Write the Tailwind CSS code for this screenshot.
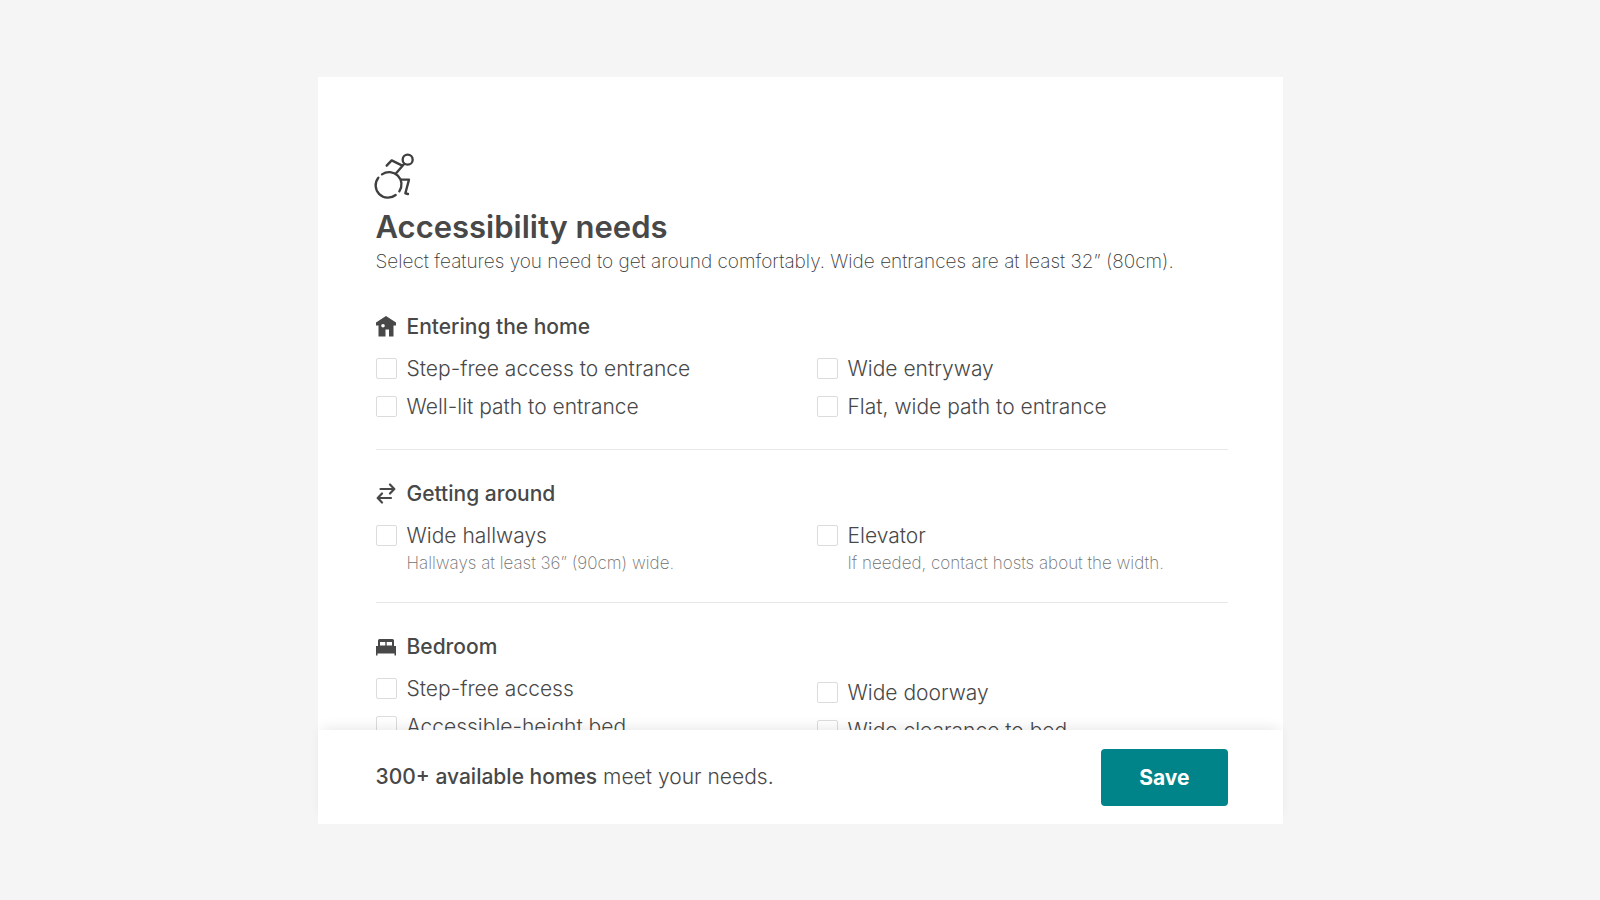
<!DOCTYPE html>
<html lang="en">
<head>
<meta charset="utf-8">
<meta name="viewport" content="width=device-width, initial-scale=1">
<title>Accessibility needs</title>
<script src="https://cdn.jsdelivr.net/npm/@tailwindcss/browser@4"></script>
</head>
<body class="flex min-h-screen items-center justify-center bg-[#f5f5f5] font-['Inter','Liberation_Sans',sans-serif] text-[21px] leading-[30px] font-light text-[#484848]">
<form class="flex h-[83vh] w-full max-w-[965px] flex-col bg-white">
  <div class="min-h-0 flex-1 overflow-hidden pt-[76px] pr-[55px] pl-[58px]">
    <header>
      <svg class="h-[45px] w-10 overflow-visible" viewBox="48 39 120 135" fill="none" stroke="#3f3f3f" stroke-width="7" stroke-linecap="round" stroke-linejoin="round" aria-hidden="true">
        <circle cx="143" cy="59" r="15"/>
        <path d="M80 77 95 61 127 77M133 71 107 101"/>
        <path d="M66 103A37 37 0 0 1 118 154"/>
        <path d="M55 113A37 37 0 0 0 107 165"/>
        <path d="M123 119H147L136 160 144 162"/>
      </svg>
      <h1 class="mt-[9px] text-[31px] leading-10 font-semibold">Accessibility needs</h1>
      <p class="text-[19px] leading-[30px] font-extralight text-[#383838]">Select features you need to get around comfortably. Wide entrances are at least 32” (80cm).</p>
    </header>

    <section class="mt-[35px] border-b border-[#e8e8e8] pb-[27px]">
      <h2 class="mb-3 flex items-center gap-[9px] font-medium">
        <svg class="h-[22px] w-[22px]" viewBox="0 0 22 22" fill="#484848" aria-hidden="true"><path fill-rule="evenodd" d="M10 0 20 6.500V9.500H17.500V20.500H13V13.500H9.500V20.500H2.500V9.500H0V6.500ZM7 8A1.800 1.800 0 1 0 7 11.600 1.800 1.800 0 0 0 7 8Z"/></svg>
        Entering the home
      </h2>
      <div class="grid grid-cols-2 gap-x-[30px] gap-y-2">
        <label class="flex items-center gap-2.5"><input type="checkbox" class="size-[21px] shrink-0 appearance-none rounded-[2px] border border-[#dcdcdc] bg-white checked:bg-[#008489]">Step-free access to entrance</label>
        <label class="flex items-center gap-2.5"><input type="checkbox" class="size-[21px] shrink-0 appearance-none rounded-[2px] border border-[#dcdcdc] bg-white checked:bg-[#008489]">Wide entryway</label>
        <label class="flex items-center gap-2.5"><input type="checkbox" class="size-[21px] shrink-0 appearance-none rounded-[2px] border border-[#dcdcdc] bg-white checked:bg-[#008489]">Well-lit path to entrance</label>
        <label class="flex items-center gap-2.5"><input type="checkbox" class="size-[21px] shrink-0 appearance-none rounded-[2px] border border-[#dcdcdc] bg-white checked:bg-[#008489]">Flat, wide path to entrance</label>
      </div>
    </section>

    <section class="border-b border-[#e8e8e8] pt-[29px] pb-[27px]">
      <h2 class="mb-3 flex items-center gap-[9px] font-medium">
        <svg class="h-[22px] w-[22px]" viewBox="0 0 22 22" fill="none" stroke="#484848" stroke-width="2.200" stroke-linecap="round" stroke-linejoin="round" aria-hidden="true"><path d="M4.500 6H18M14 1.500 18.300 6 14 10.500M15 15H2M6 10.500 1.700 15 6 19.500"/></svg>
        Getting around
      </h2>
      <div class="grid grid-cols-2 gap-x-[30px]">
        <div>
          <label class="flex items-center gap-2.5"><input type="checkbox" aria-describedby="hallways-hint" class="size-[21px] shrink-0 appearance-none rounded-[2px] border border-[#dcdcdc] bg-white checked:bg-[#008489]">Wide hallways</label>
          <p id="hallways-hint" class="pl-[31px] text-[17px] leading-6 font-extralight text-[#707070]">Hallways at least 36” (90cm) wide.</p>
        </div>
        <div>
          <label class="flex items-center gap-2.5"><input type="checkbox" aria-describedby="elevator-hint" class="size-[21px] shrink-0 appearance-none rounded-[2px] border border-[#dcdcdc] bg-white checked:bg-[#008489]">Elevator</label>
          <p id="elevator-hint" class="pl-[31px] text-[17px] leading-6 font-extralight text-[#707070]">If needed, contact hosts about the width.</p>
        </div>
      </div>
    </section>

    <section class="pt-[29px] pb-[27px]">
      <h2 class="mb-3 flex items-center gap-[9px] font-medium">
        <svg class="h-[22px] w-[22px]" viewBox="0 0 22 22" fill="#484848" aria-hidden="true"><path fill-rule="evenodd" d="M3.500 3H16.500Q18 3 18 4.500V10H20V19.500H18.500V17.500H1.500V19.500H0V10H2V4.500Q2 3 3.500 3ZM4 6V9.500H9.300V6ZM10.700 6V9.500H16V6Z"/></svg>
        Bedroom
      </h2>
      <div class="grid grid-cols-2 gap-x-[30px]">
        <div class="flex flex-col gap-2">
          <label class="flex items-center gap-2.5"><input type="checkbox" class="size-[21px] shrink-0 appearance-none rounded-[2px] border border-[#dcdcdc] bg-white checked:bg-[#008489]">Step-free access</label>
          <label class="flex items-center gap-2.5"><input type="checkbox" class="size-[21px] shrink-0 appearance-none rounded-[2px] border border-[#dcdcdc] bg-white checked:bg-[#008489]">Accessible-height bed</label>
        </div>
        <div class="flex flex-col gap-2 pt-1">
          <label class="flex items-center gap-2.5"><input type="checkbox" class="size-[21px] shrink-0 appearance-none rounded-[2px] border border-[#dcdcdc] bg-white checked:bg-[#008489]">Wide doorway</label>
          <label class="flex items-center gap-2.5"><input type="checkbox" class="size-[21px] shrink-0 appearance-none rounded-[2px] border border-[#dcdcdc] bg-white checked:bg-[#008489]">Wide clearance to bed</label>
        </div>
      </div>
    </section>
  </div>

  <footer class="relative flex items-center justify-between bg-white pt-[19px] pr-[55px] pb-[18px] pl-[58px] shadow-[0_-6px_12px_-4px_rgba(0,0,0,0.09)]">
    <p><strong class="font-medium">300+ available homes</strong> meet your needs.</p>
    <button type="submit" class="rounded-[4px] bg-[#008489] px-[38px] py-[14px] leading-[29px] font-bold text-white">Save</button>
  </footer>
</form>
</body>
</html>
